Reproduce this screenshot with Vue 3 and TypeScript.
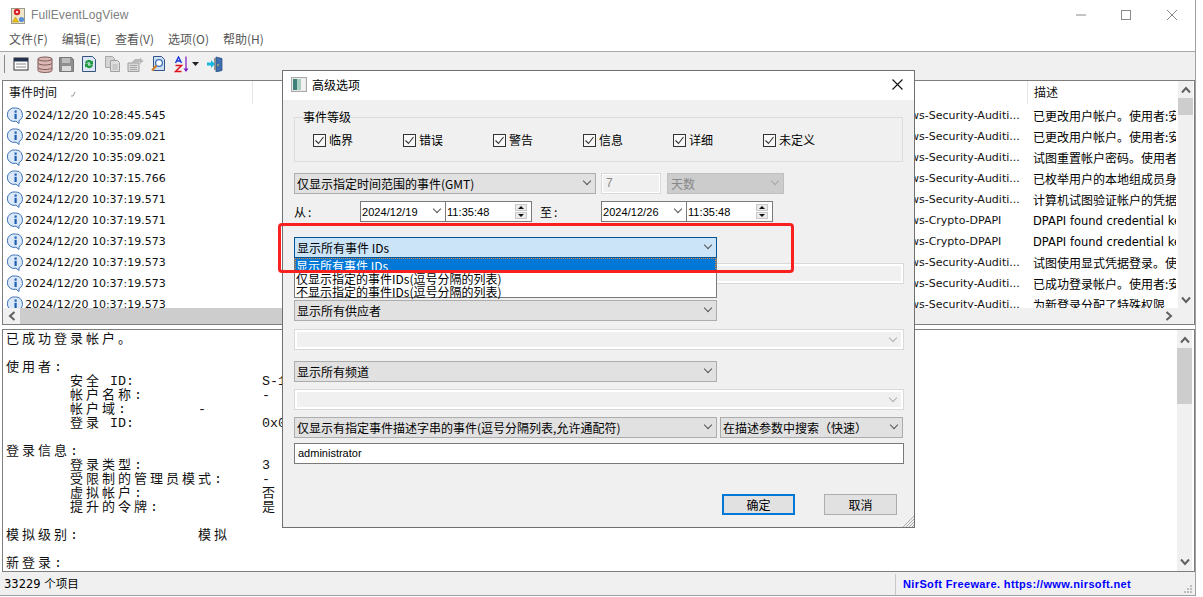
<script setup lang="ts">
const menus = ['文件(F)', '编辑(E)', '查看(V)', '选项(O)', '帮助(H)']
const sec = 'Microsoft-Windows-Security-Auditi...'
const cry = 'Microsoft-Windows-Crypto-DPAPI'
const rows = [
  ['10:28:45.545', sec, '已更改用户帐户。使用者:安全 ID'],
  ['10:35:09.021', sec, '已更改用户帐户。使用者:安全 ID'],
  ['10:35:09.021', sec, '试图重置帐户密码。使用者:安全'],
  ['10:37:15.766', sec, '已枚举用户的本地组成员身份'],
  ['10:37:19.571', sec, '计算机试图验证帐户的凭据。'],
  ['10:37:19.571', cry, 'DPAPI found credential key'],
  ['10:37:19.573', cry, 'DPAPI found credential key'],
  ['10:37:19.573', sec, '试图使用显式凭据登录。使用者'],
  ['10:37:19.573', sec, '已成功登录帐户。使用者:安全 ID'],
  ['10:37:19.573', sec, '为新登录分配了特殊权限']
]
const levels = ['临界', '错误', '警告', '信息', '详细', '未定义']

const cells = (s: string) => [...s].reduce((n, c) => n + (c.charCodeAt(0) > 255 ? 2 : 1), 0)
const kv = (label: string, col: number, value: string) => {
  const head = '        ' + label
  return head + ' '.repeat(Math.max(1, col - cells(head))) + value
}
const text = [
  '已成功登录帐户。',
  '',
  '使用者:',
  kv('安全 ID:', 32, 'S-1-5-18'),
  kv('帐户名称:', 32, '-'),
  kv('帐户域:', 24, '-'),
  kv('登录 ID:', 32, '0x0'),
  '',
  '登录信息:',
  kv('登录类型:', 32, '3'),
  kv('受限制的管理员模式:', 32, '-'),
  kv('虚拟帐户:', 32, '否'),
  kv('提升的令牌:', 32, '是'),
  '',
  '模拟级别:' + ' '.repeat(15) + '模拟',
  '',
  '新登录:'
]
const runs = (line: string) =>
  (line.match(/[^\x00-\xff]+|[\x00-\xff]+/g) || []).map((t) => ({ t, wide: t.charCodeAt(0) > 255 }))
</script>

<template>
  <div class="window">
    <header class="titlebar">
      <svg class="appicon" width="14" height="17" viewBox="0 0 14 17">
        <rect x="0.5" y="1.5" width="13" height="15" fill="#efe6c8" stroke="#9a9a8a" />
        <circle cx="6" cy="5" r="3.2" fill="#d8232a" />
        <circle cx="6" cy="5" r="1.1" fill="#fff" />
        <path d="M1.5 15l3-5 3 5z" fill="#f4c20d" stroke="#a8860b" stroke-width=".5" />
        <circle cx="10.5" cy="12.5" r="2.6" fill="#5b8fd6" />
      </svg>
      <span class="apptitle">FullEventLogView</span>
      <div class="caption">
        <svg width="12" height="12" viewBox="0 0 12 12"><path d="M1 6h10" /></svg>
        <svg width="12" height="12" viewBox="0 0 12 12"><rect x="1.5" y="1.5" width="9" height="9" /></svg>
        <svg width="12" height="12" viewBox="0 0 12 12"><path d="M1 1l10 10M11 1L1 11" /></svg>
      </div>
    </header>
    <nav class="menubar">
      <span v-for="m in menus" :key="m">{{ m }}</span>
    </nav>
    <div class="toolbar">
      <i class="grip"></i>
      <svg class="t1" width="16" height="16" viewBox="0 0 16 16"><rect x="1" y="2" width="14" height="12" fill="#fff" stroke="#333" /><rect x="1" y="2" width="14" height="3.500" fill="#22324e" /><path d="M3 8h10M3 11h10" stroke="#888" /></svg>
      <svg class="t2" width="16" height="17" viewBox="0 0 16 17"><g fill="#dcb8b4" stroke="#7d5a58"><path d="M1 11.5v3c0 1 3 2 7 2s7-1 7-2v-3z" /><path d="M1 7v4.500c0 1 3 2 7 2s7-1 7-2V7z" /><path d="M1 3v4c0 1 3 2 7 2s7-1 7-2V3z" /><ellipse cx="8" cy="3" rx="7" ry="2" /></g></svg>
      <svg class="t3" width="15" height="15" viewBox="0 0 15 15"><path d="M.5.5h12l2 2v12H.5z" fill="#8f8f8f" stroke="#777" /><rect x="3" y="1" width="8" height="5" fill="#bdbdbd" /><rect x="3" y="9" width="9" height="5" fill="#dcdcdc" /></svg>
      <svg class="t4" width="14" height="16" viewBox="0 0 14 16"><path d="M.5.500h10l3 3v12H.500z" fill="#dbe7f6" stroke="#36527f" /><path d="M3 6.500a4 4 0 0 1 7-1l1-1v4H7l1.500-1.500a2.500 2.500 0 0 0-4 .5z" fill="#1c9a3a" /><path d="M11 9.500a4 4 0 0 1-7 1l-1 1v-4h4l-1.500 1.500a2.500 2.500 0 0 0 4-.5z" fill="#1c9a3a" /></svg>
      <svg class="t5" width="15" height="16" viewBox="0 0 15 16"><path d="M.5.500h7l2 2v9H.500z" fill="#d4d4d4" stroke="#a8a8a8" /><path d="M5.500 4.500h7l2 2v9h-9z" fill="#dedede" stroke="#a0a0a0" /><path d="M7.500 9h5M7.500 11h5M7.500 13h5" stroke="#b0b0b0" /></svg>
      <svg class="t6" width="17" height="15" viewBox="0 0 17 15"><path d="M1 6h11v8.500H1z" fill="#d8d8d8" stroke="#a0a0a0" /><path d="M3 8.500h7M3 10.500h7M3 12.500h7" stroke="#aaa" /><path d="M4 6l4-4h5v-1.500L16.500 4 13 7V5.500H9.500L8 6z" fill="#b8b8b8" /></svg>
      <svg class="t7" width="14" height="16" viewBox="0 0 14 16"><path d="M2.500.500h8l3 3v11h-11z" fill="#cfe0f5" stroke="#31548c" /><circle cx="8" cy="7" r="3.400" fill="#fff" stroke="#3b6fb5" stroke-width="1.300" /><path d="M5.500 9.500L1 14.500" stroke="#d0812a" stroke-width="2.200" /></svg>
      <span class="sorticon">
        <svg width="16" height="17" viewBox="0 0 16 17"><path d="M1.500 7L4.500 1l3 6M2.500 5h4" fill="none" stroke="#1a35d8" stroke-width="1.400" /><path d="M1.500 9.500h6l-6 6h6" fill="none" stroke="#e0121c" stroke-width="1.500" /><path d="M12 .5v14" stroke="#7c19c4" stroke-width="1.200" /><path d="M9.500 12.500H14.500L12 16z" fill="#7c19c4" /></svg>
        <svg width="7" height="4" viewBox="0 0 7 4"><path d="M0 0h7L3.500 4z" fill="#222" /></svg>
      </span>
      <svg class="t9" width="16" height="16" viewBox="0 0 16 16"><path d="M9 1l6 1.500v12L9 16z" fill="#3f6fb0" stroke="#24477a" stroke-width=".7" /><path d="M7 2h2v12H7z" fill="#8f8f8f" /><path d="M0 6.500h4V4l4 4-4 4V9.500H0z" fill="#16b8e6" /><circle cx="11" cy="9" r=".8" fill="#ffd23c" /></svg>
    </div>

    <section class="list">
      <div class="listmain">
        <div class="listhead">
          <div class="hcol hdate">事件时间<svg width="6" height="6" viewBox="0 0 6 6"><path d="M1 5h2l2-4" fill="none" stroke="#9a9a9a" /></svg></div>
          <div class="hcol hmid"></div>
          <div class="hcol hdesc">描述</div>
        </div>
        <div class="listrows">
          <div v-for="(r, i) in rows" :key="i" class="row">
            <svg class="info" width="17" height="17" viewBox="0 0 17 17">
              <path d="M8.500 1a6.800 6.800 0 0 1 3.500 12.700V16.500L9 14.200A6.800 6.800 0 1 1 8.500 1z" fill="#dbe9f8" stroke="#3f74b8" />
              <rect x="7.500" y="3.500" width="2.200" height="2.200" fill="#1f5fb0" />
              <rect x="7.500" y="6.800" width="2.200" height="5.200" fill="#1f5fb0" />
            </svg>
            <span class="cdate">2024/12/20 {{ r[0] }}</span>
            <span class="cprov">{{ r[1] }}</span>
            <span class="cdesc" :class="{ latin: r[2].startsWith('DPAPI') }">{{ r[2] }}</span>
          </div>
        </div>
        <div class="hbar">
          <svg class="arrow" width="8" height="10" viewBox="0 0 8 10"><path d="M6.500 1L2 5l4.500 4" /></svg>
          <div class="hthumb"></div>
          <svg class="arrow" width="8" height="10" viewBox="0 0 8 10"><path d="M1.500 1L6 5 1.500 9" /></svg>
        </div>
      </div>
      <div class="vbar listv">
        <svg class="arrow" width="10" height="8" viewBox="0 0 10 8"><path d="M1 6.500L5 2l4 4.500" /></svg>
        <div class="vthumb thumb1"></div>
        <svg class="arrow vdown" width="10" height="8" viewBox="0 0 10 8"><path d="M1 1.500L5 6l4-4.500" /></svg>
      </div>
    </section>

    <section class="detail">
      <div class="detailtext">
        <div v-for="(l, i) in text" :key="i" class="line"><span v-for="(p, j) in runs(l)" :key="j" :class="p.wide ? 'wide' : 'narrow'">{{ p.t }}</span></div>
      </div>
      <div class="vbar detailv">
        <svg class="arrow" width="10" height="8" viewBox="0 0 10 8"><path d="M1 6.500L5 2l4 4.500" /></svg>
        <div class="vthumb thumb2"></div>
        <svg class="arrow vdown" width="10" height="8" viewBox="0 0 10 8"><path d="M1 1.500L5 6l4-4.500" /></svg>
      </div>
    </section>

    <footer class="status">
      <span class="count">33229 个项目</span>
      <span class="link">NirSoft Freeware. https://www.nirsoft.net</span>
      <svg class="sgrip" width="9" height="9" viewBox="0 0 9 9"><path d="M6 0h2v2H6zM3 3h2v2H3zM6 3h2v2H6zM0 6h2v2H0zM3 6h2v2H3zM6 6h2v2H6z" fill="#bdbdbd" /></svg>
    </footer>

    <div class="dialog">
      <div class="dtitle">
        <svg width="16" height="15" viewBox="0 0 16 15"><rect x=".5" y=".5" width="15" height="14" fill="#e8e8e8" stroke="#a8a8a8" /><rect x="2" y="2" width="4" height="11" fill="#3f7f7a" /><rect x="6" y="2" width="4" height="11" fill="#a8cfc0" /><rect x="10" y="2" width="4" height="11" fill="#f2f2f2" /></svg>
        <span>高级选项</span>
        <svg class="dclose" width="11" height="11" viewBox="0 0 11 11"><path d="M.5.5l10 10M10.500.5l-10 10" /></svg>
      </div>
      <div class="dbody">
        <fieldset class="group">
          <legend>事件等级</legend>
          <div class="checks">
            <label v-for="l in levels" :key="l" class="check">
              <span class="cbox"><svg width="11" height="11" viewBox="0 0 11 11"><path d="M1.500 5.500l3 3 5-6.500" /></svg></span>{{ l }}
            </label>
          </div>
        </fieldset>

        <div class="frow r1">
          <div class="sel w302">仅显示指定时间范围的事件(GMT)</div>
          <div class="num">7</div>
          <div class="sel days">天数</div>
        </div>

        <div class="frow r2">
          <span class="lbl from">从:</span>
          <div class="dt">
            <span class="dpart">2024/12/19<i class="chev"></i></span>
            <span class="tpart">11:35:48<span class="spin"><b class="up"></b><b class="dn"></b></span></span>
          </div>
          <span class="lbl to">至:</span>
          <div class="dt">
            <span class="dpart">2024/12/26<i class="chev"></i></span>
            <span class="tpart">11:35:48<span class="spin"><b class="up"></b><b class="dn"></b></span></span>
          </div>
        </div>

        <div class="idwrap">
          <div class="sel w423 focus">显示所有事件 IDs</div>
          <div class="drop">
            <div class="opt on">显示所有事件 IDs</div>
            <div class="opt">仅显示指定的事件IDs(逗号分隔的列表)</div>
            <div class="opt">不显示指定的事件IDs(逗号分隔的列表)</div>
          </div>
        </div>
        <div class="dis m5"></div>
        <div class="sel w423 m16">显示所有供应者</div>
        <div class="dis m8"><i class="chev faint"></i></div>
        <div class="sel w423 m11">显示所有频道</div>
        <div class="dis m7"><i class="chev faint"></i></div>
        <div class="frow m7 g3">
          <div class="sel w423">仅显示有指定事件描述字串的事件(逗号分隔列表,允许通配符)</div>
          <div class="sel w183">在描述参数中搜索（快速）</div>
        </div>
        <div class="input m5">administrator</div>
        <div class="btns">
          <div class="btn def">确定</div>
          <div class="btn">取消</div>
        </div>
      </div>
      <svg class="dgrip" width="12" height="12" viewBox="0 0 12 12"><path d="M12 1L1 12M12 4L4 12M12 7L7 12M12 10l-2 2" stroke="#aaa" /></svg>
    </div>

    <div class="redbox"></div>
  </div>
</template>

<style scoped>
.window {
  position: relative;
  width: 1196px;
  height: 596px;
  box-sizing: border-box;
  border-right: 1px solid #a0a0a0;
  border-bottom: 1px solid #a0a0a0;
  background: #fff;
  display: flex;
  flex-direction: column;
  overflow: hidden;
  font: 12px/16px "Noto Sans CJK SC", "Liberation Sans", sans-serif;
  color: #000;
}
.titlebar {
  height: 30px;
  flex: none;
  display: flex;
  align-items: center;
  padding-left: 11px;
}
.appicon { margin-top: 1px; }
.apptitle {
  margin-left: 6px;
  font: 12px "Liberation Sans", sans-serif;
  letter-spacing: .1px;
  color: #808080;
}
.caption {
  margin-left: auto;
  display: flex;
  gap: 33px;
  padding-right: 17px;
}
.caption svg { fill: none; stroke: #8a8a8a; }
.caption svg:last-child { margin-left: 1px; }
.menubar {
  height: 21px;
  flex: none;
  box-sizing: content-box;
  display: flex;
  gap: 14px;
  padding: 0 0 0 9px;
  align-items: flex-start;
  line-height: 18px;
  color: #555;
  border-bottom: 1px solid #a8a8a8;
}
.toolbar {
  height: 28px;
  flex: none;
  box-sizing: border-box;
  background: #f0f0f0;
  display: flex;
  align-items: center;
  padding: 0 0 4px 4px;
}
.grip { width: 1px; height: 18px; background: #8a8a8a; }
.t1 { margin-left: 8px; }
.t2 { margin-left: 8px; }
.t3 { margin-left: 6px; }
.t4 { margin-left: 8px; }
.t5 { margin-left: 9px; }
.t6 { margin-left: 7px; }
.t7 { margin-left: 7px; }
.sorticon { margin-left: 9px; display: flex; align-items: center; gap: 2px; }
.t9 { margin-left: 8px; }

.list {
  height: 245px;
  flex: none;
  box-sizing: border-box;
  margin-left: 2px;
  border: 1px solid #7e7e7e;
  display: flex;
}
.listmain { flex: 1; min-width: 0; display: flex; flex-direction: column; }
.listhead { height: 24px; flex: none; display: flex; }
.hcol {
  box-sizing: border-box;
  border-right: 1px solid #e5e5e5;
  padding-left: 6px;
  line-height: 22px;
  color: #111;
  height: 23px;
}
.hcol svg { margin-left: 13px; }
.hdate { width: 250px; }
.hmid { width: 775px; }
.hdesc { border-right: 0; }
.listrows { flex: 1; min-height: 0; overflow: hidden; }
.row { height: 21px; display: flex; align-items: center; white-space: nowrap; }
.info { margin-left: 4px; flex: none; }
.cdate {
  margin-left: 1px;
  width: 228px;
  font: 11px "DejaVu Sans", sans-serif;
  color: #111;
}
.cprov {
  margin-left: 569px;
  width: 206px;
  flex: none;
  font: 11px "DejaVu Sans", sans-serif;
  color: #111;
}
.cdesc { margin-left: 5px; width: 143px; overflow: hidden; flex: none; }
.latin { font: 11.5px "DejaVu Sans", sans-serif; }
.hbar {
  height: 16px;
  flex: none;
  background: #f0f0f0;
  display: flex;
  align-items: center;
  padding: 0 5px 0 5px;
}
.hthumb { width: 400px; height: 16px; margin: 0 auto 0 4px; background: #cdcdcd; }
.arrow { fill: none; stroke: #606060; stroke-width: 2; flex: none; }
.vbar {
  width: 15px;
  flex: none;
  background: #f0f0f0;
  display: flex;
  flex-direction: column;
  align-items: center;
  padding-top: 5px;
  box-sizing: border-box;
}
.listv { margin-right: 1px; padding-bottom: 20px; }
.vthumb { width: 15px; background: #cdcdcd; }
.thumb1 { height: 17px; margin-top: 4px; }
.thumb2 { height: 56px; margin-top: 4px; }
.vdown { margin-top: auto; }

.detail {
  height: 243px;
  flex: none;
  box-sizing: border-box;
  margin: 4px 0 0 2px;
  border: 1px solid #7e7e7e;
  display: flex;
  overflow: hidden;
}
.detailtext { flex: 1; min-width: 0; padding: 1px 0 0 3px; overflow: hidden; }
.line { height: 14px; white-space: pre; line-height: 14px; color: #111; }
.wide { font: 13px/14px "Noto Sans CJK SC", sans-serif; letter-spacing: 3px; }
.narrow { font: 13.33px/14px "Liberation Mono", monospace; }
.detailv { margin-right: 2px; padding-bottom: 5px; padding-top: 6px; }

.status {
  flex: 1;
  display: flex;
  align-items: center;
  background: #f0f0f0;
  position: relative;
  padding-top: 1px;
}
.count { width: 895px; padding-left: 4px; box-sizing: border-box; font-family: "DejaVu Sans", "Noto Sans CJK SC", sans-serif; font-size: 11.500px; }
.link {
  border-left: 1px solid #c8c8c8;
  padding-left: 7px;
  font: bold 11px/21px "Liberation Sans", sans-serif;
  letter-spacing: .37px;
  color: #0000ff;
}
.sgrip { position: absolute; right: 2px; bottom: 1px; }

.dialog {
  position: absolute;
  left: 282px;
  top: 70px;
  width: 633px;
  height: 458px;
  box-sizing: border-box;
  border: 1px solid #707070;
  background: #f0f0f0;
  display: flex;
  flex-direction: column;
}
.dtitle {
  height: 29px;
  flex: none;
  box-sizing: border-box;
  background: #fff;
  display: flex;
  align-items: center;
  padding: 0 0 2px 8px;
  gap: 5px;
}
.dclose { margin-left: auto; margin-right: 11px; fill: none; stroke: #111; stroke-width: 1.100; }
.dbody { padding: 10px 10px 0 11px; }
.group {
  margin: 0;
  padding: 8px 0 0 8px;
  width: 609px;
  height: 52px;
  box-sizing: border-box;
  border: 1px solid #dcdcdc;
}
.group legend { padding: 0; line-height: 14px; height: 14px; }
.checks { display: flex; padding-left: 10px; }
.check { width: 90px; display: flex; align-items: center; gap: 3px; height: 16px; }
.cbox {
  width: 13px;
  height: 13px;
  box-sizing: border-box;
  border: 1px solid #333;
  background: #f8f8f8;
  display: flex;
  align-items: center;
  justify-content: center;
}
.cbox svg { fill: none; stroke: #333; stroke-width: 1.100; }

.frow { display: flex; }
.r1 { margin-top: 11px; }
.r2 { margin-top: 7px; height: 21px; align-items: center; }
.sel {
  height: 21px;
  box-sizing: border-box;
  border: 1px solid #adadad;
  background: #e1e1e1;
  padding-left: 2px;
  line-height: 19px;
  display: flex;
  white-space: nowrap;
}
.sel::after, .chev {
  content: "";
  display: block;
  width: 6px;
  height: 6px;
  box-sizing: border-box;
  border-right: 1px solid #555;
  border-bottom: 1px solid #555;
  transform: rotate(45deg);
  margin: 4px 5px 0 auto;
  flex: none;
}
.w302 { width: 302px; }
.w423 { width: 423px; }
.w183 { width: 183px; }
.num {
  width: 60px;
  height: 21px;
  margin-left: 5px;
  box-sizing: border-box;
  border: 1px solid #d9d9d9;
  background: #f0f0f0;
  box-shadow: inset 0 0 0 1px #fff;
  padding-left: 4px;
  line-height: 19px;
  color: #888;
  font-family: "Liberation Sans", sans-serif;
}
.days { width: 117px; margin-left: 6px; background: #ccc; border-color: #bfbfbf; color: #888; padding-left: 3px; }
.days::after { border-color: #a8a8a8; }
.lbl { letter-spacing: 2px; display: block; margin-top: -1px; padding-top: 1px; }
.from { width: 66px; }
.to { width: 61px; margin-left: 8px; }
.dt {
  width: 172px;
  height: 21px;
  box-sizing: border-box;
  border: 1px solid #7a7a7a;
  background: #fff;
  display: flex;
  font: 11px/20px "Liberation Sans", sans-serif;
  letter-spacing: .05px;
}
.dpart {
  width: 85px;
  box-sizing: border-box;
  padding-left: 1px;
  border-right: 1px solid #7a7a7a;
  display: flex;
}
.tpart { flex: 1; padding-left: 1px; display: flex; }
.spin { margin-left: auto; margin-right: 4px; width: 12px; display: flex; flex-direction: column; gap: 1px; padding-top: 2px; }
.spin b { display: flex; height: 7px; background: #ececec; border: 1px solid #c8c8c8; box-sizing: border-box; align-items: center; justify-content: center; }
.spin b::after { content: ""; border-left: 3px solid transparent; border-right: 3px solid transparent; }
.up::after { border-bottom: 3px solid #111; }
.dn::after { border-top: 3px solid #111; }

.idwrap { position: relative; margin-top: 15px; height: 21px; }
.focus { background: #cce4f7; border-color: #005499; }
.drop {
  position: absolute;
  left: 0;
  top: 21px;
  width: 423px;
  height: 40px;
  box-sizing: border-box;
  border: 1px solid #7a7a7a;
  border-top: 0;
  background: #fff;
  z-index: 2;
}
.opt { height: 13px; line-height: 15px; padding-left: 1px; white-space: nowrap; }
.on { background: #0078d7; color: #fff; outline: 1px dotted #e08a3c; outline-offset: -1px; }
.dis {
  height: 21px;
  width: 610px;
  box-sizing: border-box;
  border: 1px solid #d9d9d9;
  background: #f0f0f0;
  box-shadow: inset 0 0 0 2px #fff;
  display: flex;
}
.faint { border-color: #b0b0b0; margin-top: 5px; margin-right: 7px; }
.m5 { margin-top: 5px; }
.m16 { margin-top: 16px; }
.m8 { margin-top: 8px; }
.m11 { margin-top: 11px; }
.m7 { margin-top: 7px; }
.g3 { gap: 3px; }
.input {
  width: 610px;
  height: 21px;
  box-sizing: border-box;
  border: 1px solid #7a7a7a;
  background: #fff;
  padding-left: 3px;
  font: 11px/19px "Liberation Sans", sans-serif;
}
.btns { display: flex; justify-content: flex-end; gap: 29px; margin-top: 30px; padding-right: 7px; }
.btn {
  width: 73px;
  height: 21px;
  box-sizing: border-box;
  border: 1px solid #adadad;
  background: #e1e1e1;
  text-align: center;
  line-height: 19px;
}
.def { border: 2px solid #0078d7; line-height: 17px; }
.dgrip { position: absolute; right: 0; bottom: 0; }

.redbox {
  position: absolute;
  left: 278px;
  top: 223px;
  width: 516px;
  height: 50px;
  box-sizing: border-box;
  border: 3px solid #fb2020;
  border-radius: 4px;
  z-index: 5;
  pointer-events: none;
}
</style>

<style>
html, body { background: #fff; }
</style>
